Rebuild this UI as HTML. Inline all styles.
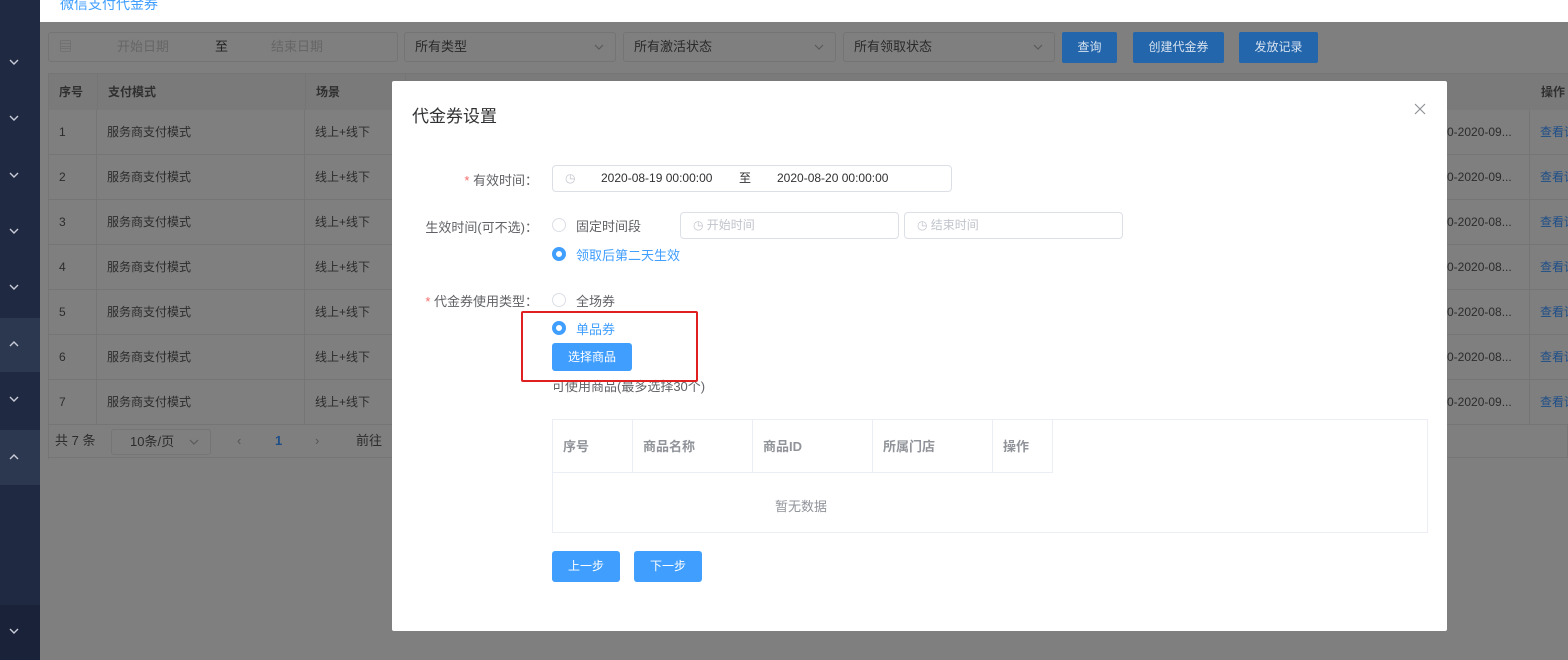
<!DOCTYPE html>
<html style="background:#7f7f7f"><head><meta charset="utf-8"><style>
*{margin:0;padding:0;box-sizing:border-box}
html,body{background:#7f7f7f}
body{width:1568px;height:660px;overflow:hidden;position:relative;font-family:"Liberation Sans","Noto Sans CJK SC",sans-serif;font-size:13px;color:#2a2a2a}
.abs{position:absolute}
.bg{left:0;top:0;width:1568px;height:660px;background:#7f7f7f}
.side{left:0;top:0;width:40px;height:660px;background:#1f2942}
.top{left:40px;top:0;width:1528px;height:22px;background:#fff}
.box{border:1px solid #747474;border-radius:3px;background:#7f7f7f;height:30px;top:32px;color:#555;line-height:28px;padding-left:10px;white-space:nowrap}
.btn{top:32px;height:31px;background:#2366ac;color:#d6e2ef;line-height:31px;text-align:center;border-radius:2px;font-size:12px}
.cell{position:absolute;border-right:1px solid #757575;border-bottom:1px solid #757575;padding-left:10px;color:#2c2c2c;font-size:12px;white-space:nowrap;overflow:hidden;background:#7f7f7f}
.modal{left:392px;top:81px;width:1055px;height:550px;background:#fff;border-radius:2px}
.lbl{position:absolute;text-align:right;width:146px;left:0;color:#606266;font-size:13px;white-space:nowrap}
.star{color:#f56c6c}
.inp{position:absolute;border:1px solid #dcdfe6;border-radius:4px;height:27px;color:#606266;font-size:12px;line-height:25px;white-space:nowrap}
.radio{position:absolute;width:14px;height:14px;border-radius:50%;border:1px solid #dcdfe6}
.radio.on{border:4px solid #409eff;background:#fff}
.rt{position:absolute;font-size:13px;color:#606266;white-space:nowrap}
.bb{position:absolute;background:#409eff;color:#fff;font-size:12px;text-align:center;border-radius:3px}
.th{position:absolute;top:0;height:53px;border-right:1px solid #ebeef5;border-bottom:1px solid #ebeef5;line-height:53px;padding-left:10px;color:#909399;font-weight:bold;font-size:13px}
</style></head><body>
<div class="abs bg"></div>
<div class="abs side">
<div class="abs" style="left:0;top:318px;width:40px;height:54px;background:#2c3750"></div>
<div class="abs" style="left:0;top:430px;width:40px;height:55px;background:#2c3750"></div>
<div class="abs" style="left:0;top:605px;width:40px;height:55px;background:#1a2239"></div>
<svg class="abs" style="left:0;top:0" width="40" height="660" fill="none" stroke="#c8cdd8" stroke-width="1.4">
<path d="M10 60l4 4 4-4M10 116l4 4 4-4M10 173l4 4 4-4M10 229l4 4 4-4M10 285l4 4 4-4M10 346l4-4 4 4M10 397l4 4 4-4M10 459l4-4 4 4M10 629l4 4 4-4"/></svg>
</div>
<div class="abs top"><div class="abs" style="left:20px;top:-6px;color:#409eff;font-size:14px">微信支付代金券</div></div>
<div class="abs box" style="left:48px;width:350px;color:#666"><span style="color:#666">▤</span><span style="position:absolute;left:68px">开始日期</span><span style="position:absolute;left:166px;color:#222">至</span><span style="position:absolute;left:222px">结束日期</span></div>
<svg class="abs" style="left:0;top:0" width="1100" height="70" fill="none" stroke="#5a5a5a" stroke-width="1.2"><path d="M595 45l4 4 4-4M815 45l4 4 4-4M1034 45l4 4 4-4"/></svg>
<div class="abs box" style="left:404px;width:212px;color:#2a2a2a;background:transparent">所有类型</div>
<div class="abs box" style="left:623px;width:213px;color:#2a2a2a;background:transparent">所有激活状态</div>
<div class="abs box" style="left:843px;width:212px;color:#2a2a2a;background:transparent">所有领取状态</div>
<div class="abs btn" style="left:1062px;width:55px">查询</div>
<div class="abs btn" style="left:1133px;width:91px">创建代金券</div>
<div class="abs btn" style="left:1239px;width:79px">发放记录</div>
<div class="abs" style="left:48px;top:73px;width:1520px;height:386px;border-left:1px solid #757575;border-top:1px solid #757575">
<div class="abs" style="left:0;top:0;width:1520px;height:37px;background:#7a7a7a"></div>
<div class="cell" style="left:0;top:0;width:49px;height:37px;line-height:37px;font-weight:bold;color:#303030;background:#7a7a7a">序号</div>
<div class="cell" style="left:49px;top:0;width:208px;height:37px;line-height:37px;font-weight:bold;color:#303030;background:#7a7a7a">支付模式</div>
<div class="cell" style="left:257px;top:0;width:100px;height:37px;line-height:37px;font-weight:bold;color:#303030;background:#7a7a7a">场景</div>
<div class="cell" style="left:1482px;top:0;width:40px;height:37px;line-height:37px;font-weight:bold;color:#303030;background:#7a7a7a">操作</div>
</div>
<div id="rows"></div>
<script>
var h='';var d=['09','09','08','08','08','08','09'];
for(var i=0;i<7;i++){var y=110+i*45;
h+='<div class="cell" style="left:48px;top:'+y+'px;width:49px;height:45px;line-height:45px;border-left:1px solid #757575">'+(i+1)+'</div>';
h+='<div class="cell" style="left:97px;top:'+y+'px;width:208px;height:45px;line-height:45px">服务商支付模式</div>';
h+='<div class="cell" style="left:305px;top:'+y+'px;width:100px;height:45px;line-height:45px">线上+线下</div>';
h+='<div class="cell" style="left:1447px;top:'+y+'px;width:83px;height:45px;line-height:45px;padding-left:0">0-2020-'+d[i]+'...</div>';
h+='<div class="cell" style="left:1530px;top:'+y+'px;width:40px;height:45px;line-height:45px;color:#1d4e88">查看详情</div>';}
document.getElementById('rows').innerHTML=h;
</script>
<div class="abs" style="left:48px;top:425px;width:1520px;height:33px;border:1px solid #757575;border-top:none;line-height:32px;font-size:13px;color:#2c2c2c">
<span class="abs" style="left:6px">共 7 条</span>
<span class="abs" style="left:62px;top:4px;width:100px;height:26px;border:1px solid #757575;border-radius:3px;line-height:24px;padding-left:18px">10条/页</span>
<svg class="abs" style="left:140px;top:14px" width="10" height="6" fill="none" stroke="#5a5a5a" stroke-width="1.2"><path d="M1 1l4 4 4-4"/></svg>
<span class="abs" style="left:188px;color:#555">‹</span><span class="abs" style="left:226px;color:#1d4e88;font-weight:bold">1</span><span class="abs" style="left:266px;color:#555">›</span>
<span class="abs" style="left:307px">前往</span>
</div>
<div class="abs modal">
<div class="abs" style="left:20px;top:21px;font-size:17px;color:#303133">代金券设置</div>
<svg class="abs" style="left:1022px;top:22px" width="12" height="12" stroke="#909399" stroke-width="1.2"><path d="M1 1l10 10M11 1L1 11"/></svg>
<div class="lbl" style="top:89px"><span class="star">*</span> 有效时间：</div>
<div class="inp" style="left:160px;top:84px;width:400px"><span style="position:absolute;left:12px;color:#c0c4cc">◷</span><span style="position:absolute;left:48px;color:#303133">2020-08-19 00:00:00</span><span style="position:absolute;left:186px;color:#303133">至</span><span style="position:absolute;left:224px;color:#303133">2020-08-20 00:00:00</span></div>
<div class="lbl" style="top:136px">生效时间(可不选)：</div>
<div class="radio" style="left:160px;top:137px"></div><div class="rt" style="left:184px;top:135px">固定时间段</div>
<div class="inp" style="left:288px;top:131px;width:219px;color:#c0c4cc;padding-left:12px">◷ 开始时间</div>
<div class="inp" style="left:512px;top:131px;width:219px;color:#c0c4cc;padding-left:12px">◷ 结束时间</div>
<div class="radio on" style="left:160px;top:166px"></div><div class="rt" style="left:184px;top:164px;color:#409eff">领取后第二天生效</div>
<div class="lbl" style="top:210px"><span class="star">*</span> 代金券使用类型：</div>
<div class="radio" style="left:160px;top:212px"></div><div class="rt" style="left:184px;top:210px">全场券</div>
<div class="radio on" style="left:160px;top:240px"></div><div class="rt" style="left:184px;top:238px;color:#409eff">单品券</div>
<div class="bb" style="left:160px;top:262px;width:80px;height:28px;line-height:28px">选择商品</div>
<div class="rt" style="left:160px;top:295px">可使用商品(最多选择30个)</div>
<div class="abs" style="left:129px;top:230px;width:177px;height:71px;border:2px solid #e02020;border-radius:2px"></div>
<div class="abs" style="left:160px;top:338px;width:876px;height:114px;border:1px solid #ebeef5">
<div class="th" style="left:0;width:80px">序号</div><div class="th" style="left:80px;width:120px">商品名称</div><div class="th" style="left:200px;width:120px">商品ID</div><div class="th" style="left:320px;width:120px">所属门店</div><div class="th" style="left:440px;width:60px">操作</div>
<div class="abs" style="left:222px;top:76px;color:#909399;font-size:13px">暂无数据</div>
</div>
<div class="bb" style="left:160px;top:470px;width:68px;height:31px;line-height:31px">上一步</div>
<div class="bb" style="left:242px;top:470px;width:68px;height:31px;line-height:31px">下一步</div>
</div>
</body></html>
